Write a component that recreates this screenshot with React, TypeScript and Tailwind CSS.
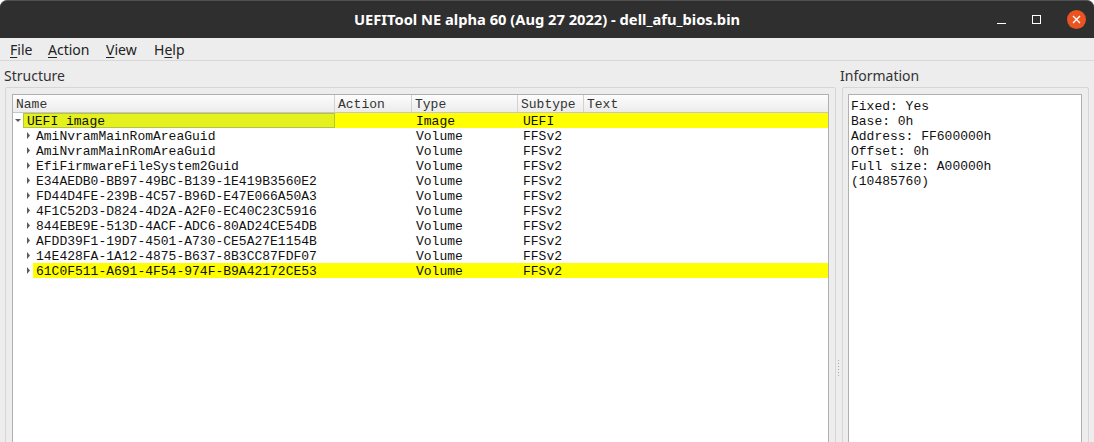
import React from "react";

const mono = "font-['Liberation_Mono','DejaVu_Sans_Mono',monospace]";
const sans = "font-['Noto_Sans','Open_Sans',sans-serif]";

type Row = {
  name: string;
  type: string;
  subtype: string;
  root?: boolean;
  hl?: boolean;
  focus?: boolean;
};

const rows: Row[] = [
  { name: "UEFI image", type: "Image", subtype: "UEFI", root: true, hl: true, focus: true },
  { name: "AmiNvramMainRomAreaGuid", type: "Volume", subtype: "FFSv2" },
  { name: "AmiNvramMainRomAreaGuid", type: "Volume", subtype: "FFSv2" },
  { name: "EfiFirmwareFileSystem2Guid", type: "Volume", subtype: "FFSv2" },
  { name: "E34AEDB0-BB97-49BC-B139-1E419B3560E2", type: "Volume", subtype: "FFSv2" },
  { name: "FD44D4FE-239B-4C57-B96D-E47E066A50A3", type: "Volume", subtype: "FFSv2" },
  { name: "4F1C52D3-D824-4D2A-A2F0-EC40C23C5916", type: "Volume", subtype: "FFSv2" },
  { name: "844EBE9E-513D-4ACF-ADC6-80AD24CE54DB", type: "Volume", subtype: "FFSv2" },
  { name: "AFDD39F1-19D7-4501-A730-CE5A27E1154B", type: "Volume", subtype: "FFSv2" },
  { name: "14E428FA-1A12-4875-B637-8B3CC87FDF07", type: "Volume", subtype: "FFSv2" },
  { name: "61C0F511-A691-4F54-974F-B9A42172CE53", type: "Volume", subtype: "FFSv2", hl: true },
];

const info = [
  "Fixed: Yes",
  "Base: 0h",
  "Address: FF600000h",
  "Offset: 0h",
  "Full size: A00000h",
  "(10485760)",
];

function Arrow({ down }: { down?: boolean }) {
  return (
    <svg width="10" height="15" viewBox="0 0 10 15" className="shrink-0">
      {down ? (
        <path d="M2 6 L8 6 L5 9 Z" fill="#5a5a5a" />
      ) : (
        <path d="M4 4 L7 7.5 L4 11 Z" fill="#5a5a5a" />
      )}
    </svg>
  );
}

function TreeRow({ row }: { row: Row }) {
  return (
    <div className={`flex h-[15px] items-stretch text-[13px] leading-[17px] text-[#111] ${mono}`}>
      <div className="flex w-[322px] shrink-0">
        {!row.root && <div className="w-[10px] shrink-0" />}
        <Arrow down={row.root} />
        <div
          className={`flex-1 pl-[3px] ${
            row.focus
              ? "border border-[#b4c43c] bg-[#e4f11f] pl-[2px] leading-[15px]"
              : row.hl
              ? "bg-[#ffff00]"
              : ""
          }`}
        >
          {row.name}
        </div>
      </div>
      <div className={`flex flex-1 ${row.hl ? "bg-[#ffff00]" : ""}`}>
        <div className="w-[77px] shrink-0" />
        <div className="w-[106px] shrink-0 pl-[4px]">{row.type}</div>
        <div className="w-[66px] shrink-0 pl-[5px]">{row.subtype}</div>
        <div className="flex-1" />
      </div>
    </div>
  );
}

function HeaderCell({ label, w }: { label: string; w?: string }) {
  return (
    <div
      className={`${w ?? "flex-1"} shrink-0 border-r border-[#d2d2d2] pl-[3px] pt-[2px] last:border-r-0`}
    >
      {label}
    </div>
  );
}

export default function App() {
  return (
    <div className="h-[442px] w-[1094px] overflow-hidden bg-white">
      {/* title bar */}
      <div
        className={`grid h-[38px] grid-cols-[120px_1fr_120px] items-center rounded-t-[7px] border-t border-[#505050] bg-[#2f2f2f] ${sans}`}
      >
        <div />
        <div className="text-center text-[14.7px] font-bold text-white">
          UEFITool NE alpha 60 (Aug 27 2022) - dell_afu_bios.bin
        </div>
        <div className="flex items-center justify-end gap-[26px] pr-[8px]">
          <div className="mt-[8px] h-[1.5px] w-[9px] bg-white" />
          <div className="h-[9px] w-[9px] border border-white" />
          <div className="flex h-[19px] w-[19px] items-center justify-center rounded-full bg-[#e95420]">
            <svg width="9" height="9" viewBox="0 0 9 9">
              <path d="M1 1 L8 8 M8 1 L1 8" stroke="white" strokeWidth="1.4" />
            </svg>
          </div>
        </div>
      </div>

      <div className="bg-[#ededed]">
        {/* menu bar */}
        <div
          className={`flex h-[23px] items-center border-b border-[#d8d8d8] pl-[10px] text-[14px] text-[#222] ${sans}`}
        >
          <div className="w-[38px]">
            <span className="underline underline-offset-2">F</span>ile
          </div>
          <div className="w-[58px]">
            <span className="underline underline-offset-2">A</span>ction
          </div>
          <div className="w-[48px]">
            <span className="underline underline-offset-2">V</span>iew
          </div>
          <div>
            H<span className="underline underline-offset-2">e</span>lp
          </div>
        </div>

        {/* body */}
        <div className="flex h-[420px]">
          {/* structure */}
          <div className="flex w-[836px] shrink-0 flex-col">
            <div className={`h-[26px] pl-[4px] pt-[4px] text-[14px] text-[#333] ${sans}`}>
              Structure
            </div>
            <div className="ml-[5px] flex flex-1 flex-col rounded-[2px] border border-[#d6d6d6] px-[6px] pt-[6px]">
              <div className="flex-1 border border-[#b0b0b0] bg-white">
                <div
                  className={`flex h-[18px] items-stretch border-b border-[#c6c6c6] bg-gradient-to-b from-[#fdfdfd] to-[#ececec] text-[13px] leading-[15px] text-[#333] ${mono}`}
                >
                  <HeaderCell label="Name" w="w-[322px]" />
                  <HeaderCell label="Action" w="w-[77px]" />
                  <HeaderCell label="Type" w="w-[106px]" />
                  <HeaderCell label="Subtype" w="w-[66px]" />
                  <HeaderCell label="Text" />
                </div>
                {rows.map((r, i) => (
                  <TreeRow key={i} row={r} />
                ))}
              </div>
            </div>
          </div>

          {/* splitter */}
          <div className="flex w-[4px] shrink-0 justify-center pt-[299px]">
            <div className="flex flex-col gap-[2px]">
              {[0, 1, 2, 3, 4, 5].map((d) => (
                <div key={d} className="h-[1px] w-[1px] bg-[#a8a8a8]" />
              ))}
            </div>
          </div>

          {/* information */}
          <div className="flex w-[254px] shrink-0 flex-col">
            <div className={`h-[26px] pt-[4px] text-[14px] text-[#333] ${sans}`}>
              Information
            </div>
            <div className="ml-[2px] flex w-[247px] flex-1 flex-col rounded-[2px] border border-[#d6d6d6] pl-[5px] pr-[6px] pt-[6px]">
              <div
                className={`flex-1 border border-[#b0b0b0] bg-white pl-[2px] pt-[4px] text-[13px] leading-[15px] text-[#111] ${mono}`}
              >
                {info.map((l) => (
                  <div key={l}>{l}</div>
                ))}
              </div>
            </div>
          </div>
        </div>
      </div>
    </div>
  );
}
